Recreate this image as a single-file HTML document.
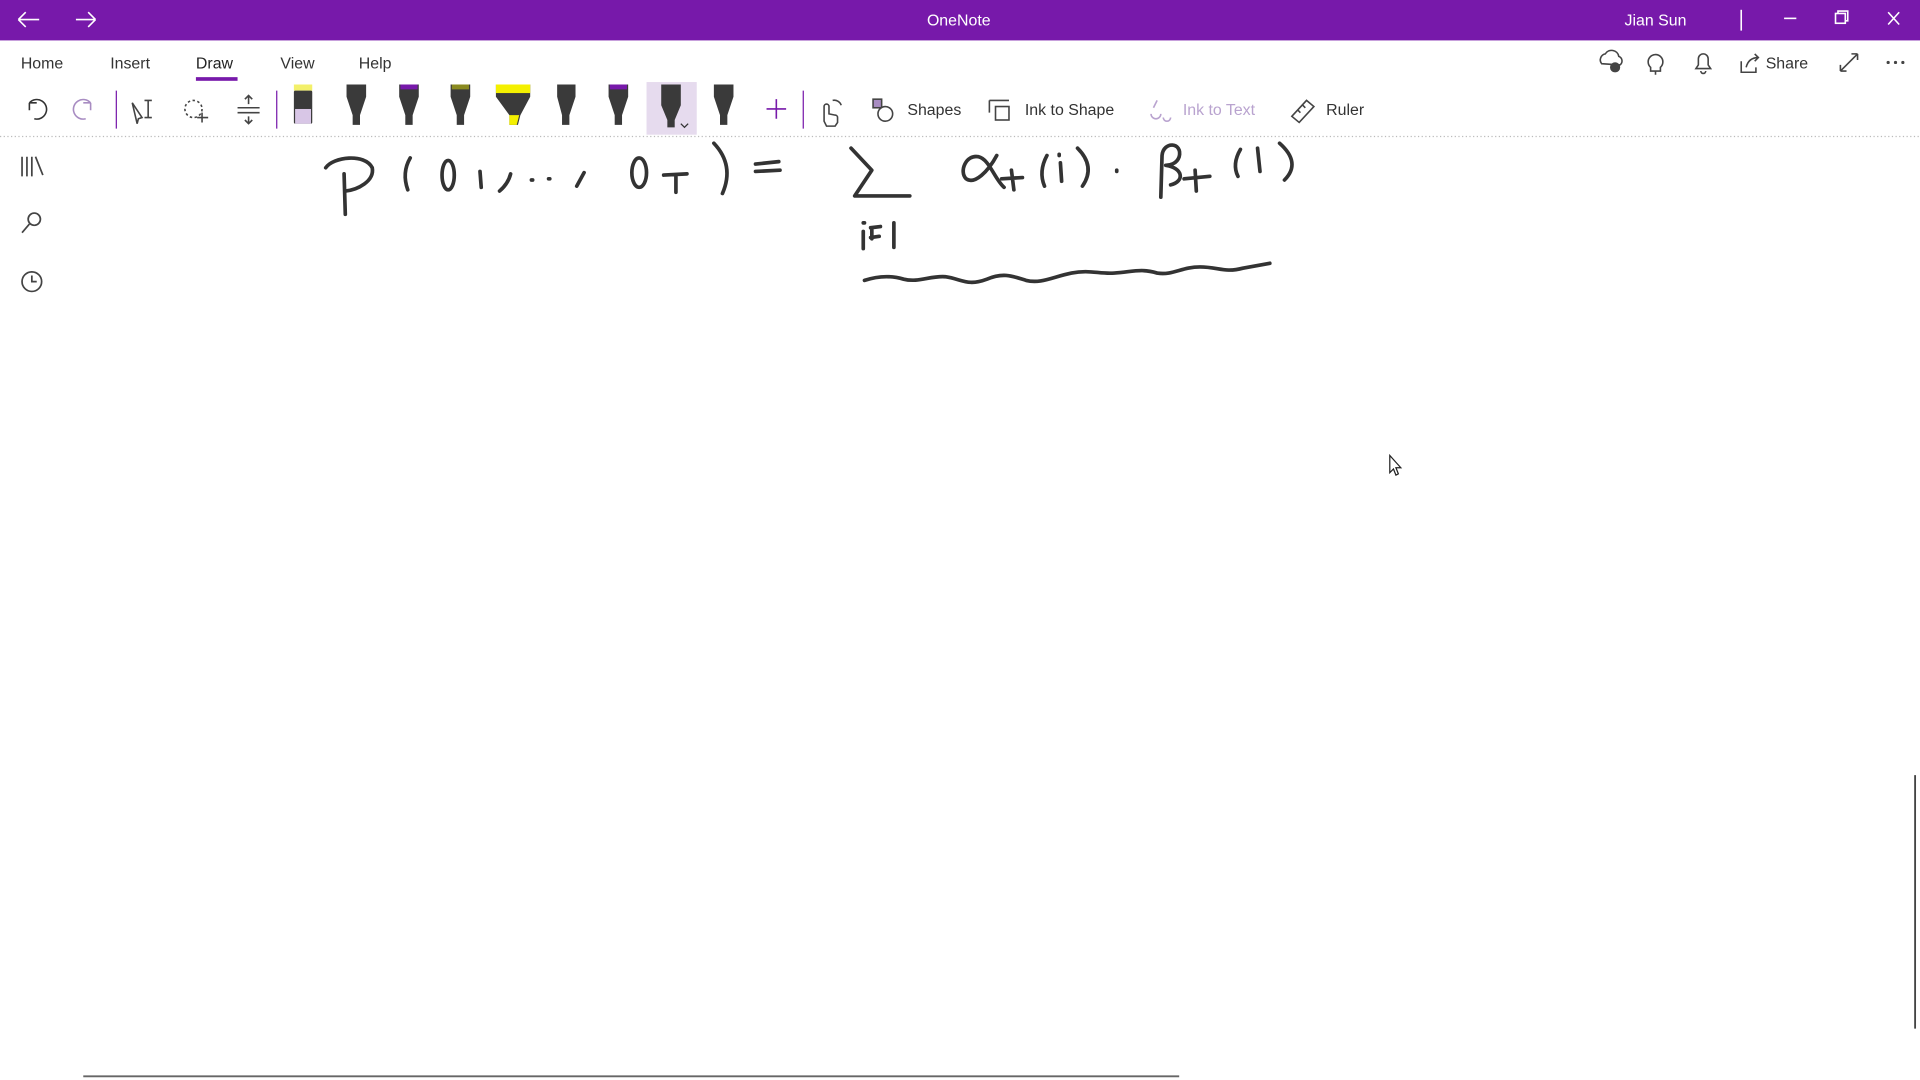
<!DOCTYPE html>
<html><head><meta charset="utf-8"><style>
html,body{margin:0;padding:0;width:1920px;height:1080px;overflow:hidden;background:#fff}
svg{display:block}
text{font-family:"Liberation Sans",sans-serif}
</style></head><body>
<svg width="1920" height="1080" viewBox="0 0 1568 882" preserveAspectRatio="none" xmlns="http://www.w3.org/2000/svg">
<rect x="0" y="0" width="1568" height="33" fill="#7719aa"/>
<g stroke="#fff" stroke-width="1.3" fill="none">
<path d="M15,16 H32 M15,16 l6,-6 M15,16 l6,6"/>
<path d="M62,16 H78 M78,16 l-6,-6 M78,16 l-6,6"/>
<path d="M1422,8 V25"/>
<path d="M1457,15 H1467"/>
<rect x="1499" y="11" width="8" height="8"/><path d="M1501,11 V9 H1509 V17 H1507"/>
<path d="M1542,10 L1551,20 M1551,10 L1542,20"/>
</g>
<text x="783" y="21" fill="#fff" font-size="13" text-anchor="middle">OneNote</text>
<text x="1352" y="21" fill="#fff" font-size="13" text-anchor="middle">Jian Sun</text>

<g font-size="13" fill="#333">
<text x="17" y="56">Home</text>
<text x="90" y="56">Insert</text>
<text x="160" y="56" fill="#222">Draw</text>
<text x="229" y="56">View</text>
<text x="293" y="56">Help</text>
<text x="1442" y="56">Share</text>
<text x="741" y="94">Shapes</text>
<text x="837" y="94">Ink to Shape</text>
<text x="966" y="94" fill="#b9a3cf">Ink to Text</text>
<text x="1083" y="94">Ruler</text>
</g>
<rect x="160" y="63" width="34" height="3" fill="#7719aa"/>

<g stroke="#444" stroke-width="1.3" fill="none">
<path d="M1308,52 a5,5 0 0 1 3,-8 a6,6 0 0 1 11,2 a4,4 0 0 1 1,7 Z"/><circle cx="1319" cy="55" r="3.5" fill="#444"/>
<path d="M1352,58 v3 M1348,55 a6,6 0 1 1 8,0 v3 h-8 z"/>
<path d="M1385,56 h12 l-2,-3 v-5 a4,4 0 0 0 -8,0 v5 z M1389,58 a2,2 0 0 0 4,0"/>
<path d="M1422,50 v9 h12 v-4 M1426,55 q2,-8 10,-8 M1433,44 l3,3 l-3,3"/>
<path d="M1503,58 L1517,44 M1503,58 v-5 M1503,58 h5 M1517,44 v5 M1517,44 h-5"/>
<path d="M24,84 a8,8 0 1 1 4,13 M24,84 v6 M24,84 h6" stroke="#333"/>
<path d="M74,84 a8,8 0 1 0 -4,13 M74,84 v6 M74,84 h-6" stroke="#a88cc2"/>
<path d="M95,74 V105 M226,74 V105 M656,74 V105" stroke="#7719aa" stroke-width="1"/>
<path d="M108,84 l8,12 l-3,1 l-1,4 z M118,82 h6 M121,82 v14 M118,96 h6"/>
<circle cx="158" cy="89" r="7" stroke-dasharray="2 2"/><path d="M161,96 h9 M165,92 v8"/>
<path d="M194,88 h18 M194,92 h18 M203,78 v7 M200,81 l3,-3 l3,3 M203,95 v6 M200,98 l3,3 l3,-3"/>
<path d="M626,89 h16 M634,81 v16" stroke="#7719aa"/>
<path d="M673,99 v-12 a2,2 0 0 1 4,0 v6 l5,1 a2,2 0 0 1 2,2 v4 l-2,3 h-7 z M680,82 a6,6 0 0 1 7,4" stroke="#444"/>
<rect x="713" y="81" width="7" height="7" fill="#a88cc2" stroke="#444"/><circle cx="723" cy="93" r="6" fill="#fff"/>
<rect x="813" y="87" width="11" height="11"/><path d="M808,82 v10 M808,82 h16"/>
<path d="M945,82 l-3,6 M940,93 a4,4 0 1 0 8,0 M950,96 a3,3 0 1 0 6,0" stroke="#b9a3cf"/>
<path d="M1055,95 l12,-13 l6,5 l-12,13 z M1060,90 l2,2 M1064,86 l2,2"/>
</g>
<g fill="#444"><circle cx="1542" cy="51" r="1.3"/><circle cx="1548" cy="51" r="1.3"/><circle cx="1554" cy="51" r="1.3"/></g>

<rect x="528" y="67" width="41" height="43" fill="#e6dbee"/>
<g fill="#3a3a3a">
<rect x="240" y="69" width="15" height="5" fill="#f3f06a"/><rect x="240" y="74" width="15" height="27" rx="1"/><rect x="241" y="89" width="13" height="12" fill="#d8c6e6"/>
<path d="M283,69 h16 v10 l-5,15 v8 h-6 v-8 l-5,-15 z"/>
<path d="M326,69 h16 v10 l-5,15 v8 h-6 v-8 l-5,-15 z"/><rect x="327" y="69" width="14" height="4" fill="#7719aa"/>
<path d="M368,69 h16 v10 l-5,15 v8 h-6 v-8 l-5,-15 z"/><rect x="369" y="69" width="14" height="4" fill="#8a8a20"/>
<path d="M405,69 h28 v10 l-8,15 l-2,8 h-7 v-8 l-11,-15 z"/><rect x="405" y="69" width="28" height="7" fill="#f4f000"/><path d="M416,94 h8 l-2,8 h-6 z" fill="#f4f000"/>
<path d="M455,69 h15 v10 l-5,15 v8 h-6 v-8 l-4,-15 z"/>
<path d="M497,69 h16 v10 l-5,15 v8 h-6 v-8 l-5,-15 z"/><rect x="498" y="69" width="14" height="4" fill="#7719aa"/>
<path d="M540,69 h16 v17 l-5,12 v6 h-6 v-6 l-5,-12 z"/>
<path d="M583,69 h16 v10 l-5,15 v8 h-6 v-8 l-5,-15 z"/>
</g>
<path d="M556,101 l3,3 l3,-3" stroke="#333" fill="none"/>
<path d="M0,111.5 H1568" stroke="#bbb" stroke-width="1" stroke-dasharray="1 2"/>

<g stroke="#444" stroke-width="1.4" fill="none">
<path d="M18,128 v16 M22,128 v16 M26,128 v16 M29,128 l6,15"/>
<circle cx="28" cy="179" r="5"/><path d="M24,183 l-6,7"/>
<circle cx="26" cy="230" r="8"/><path d="M26,225 v5 h4"/>
</g>

<g stroke="#333" stroke-width="3" fill="none" stroke-linecap="round" stroke-linejoin="round">
<path d="M281,142 L282,175"/>
<path d="M266,137 C272,128 298,125 304,137 C306,148 292,155 282,156"/>
<path d="M335,129 Q328,141 333,155"/>
<ellipse cx="366" cy="143" rx="5" ry="12"/>
<path d="M392,140 L393,153"/>
<path d="M417,142 Q415,150 408,156"/>
<path d="M434,147 L435,147 M448,146 L449,146"/>
<path d="M477,141 L471,152"/>
<ellipse cx="522" cy="141" rx="6" ry="12"/>
<path d="M542,143 L561,142 M552,143 L552,157"/>
<path d="M583,117 Q600,135 590,158"/>
<path d="M617,134 L636,132 M617,140 L637,139"/>
<path d="M695,121 L712,139 L698,160 L743,160"/>
<path d="M814,127 C807,140 796,151 789,146 C783,140 789,126 799,128 C808,130 812,146 820,153"/>
<path d="M826,139 L828,155 M818,146 L835,145"/>
<path d="M855,127 Q848,140 853,152"/>
<path d="M866,133 L867,148 M865,126 L865,127"/>
<path d="M880,121 Q895,136 884,152"/>
<path d="M912,139 L912,140"/>
<path d="M948,161 L949,127 C950,115 966,116 963,128 C961,134 955,135 952,135 C966,137 968,148 956,151"/>
<path d="M976,139 L977,156 M967,146 L988,144"/>
<path d="M1013,122 Q1006,134 1011,144"/>
<path d="M1027,121 L1029,140"/>
<path d="M1045,117 Q1063,133 1049,147"/>
<path d="M705,189 L705,203 M705,182 L706,182 M711,186 L719,185 M711,194 L718,193 M712,186 L712,195 M730,182 L730,202"/>
<path d="M706,229 C718,225 728,225 738,228 C750,231 760,225 772,226 C786,228 790,234 806,228 C820,222 828,226 838,229 C850,232 860,226 875,223 C890,220 898,224 910,223 C925,222 932,219 945,223 C958,225 965,218 980,218 C995,218 1000,223 1015,219 L1037,215"/>
</g>

<path d="M1135,372 v14 l3,-3 l2,5 l2,-1 l-2,-5 h4 z" fill="#fff" stroke="#222" stroke-width="1"/>
<path d="M1564,633 V840" stroke="#444" stroke-width="1.5"/>
<path d="M68,879 H963" stroke="#666" stroke-width="1.5"/>
</svg>
</body></html>
